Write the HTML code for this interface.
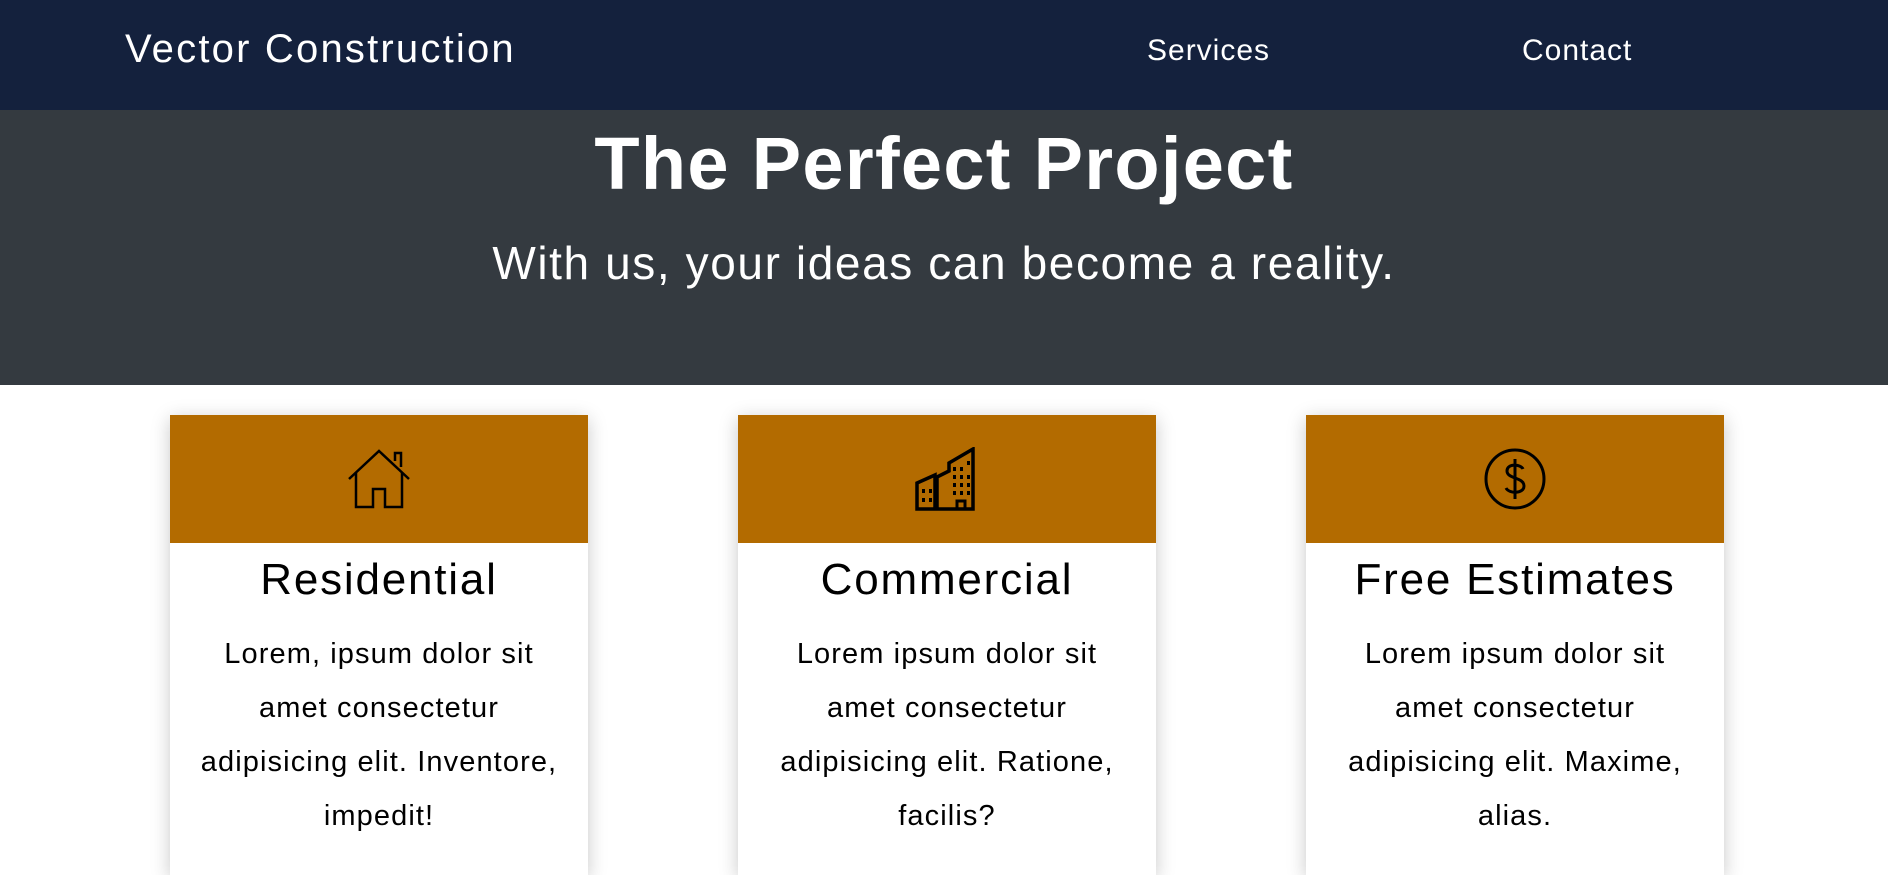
<!DOCTYPE html>
<html><head><style>
*{margin:0;padding:0;box-sizing:border-box}
body{width:1888px;height:858px;overflow:hidden;background:#fff;font-family:"Liberation Sans",sans-serif;position:relative}
nav{position:absolute;left:0;top:0;width:1888px;height:110px;background:#14213d;color:#fff}
nav .logo{position:absolute;left:125px;top:27px;font-size:40px;letter-spacing:2.2px}
nav .l{position:absolute;top:34px;font-size:30px;letter-spacing:1px}
.hero{position:absolute;top:110px;left:0;width:1888px;height:275px;background:#343a40;color:#fff;text-align:center}
.hero h1{position:absolute;top:11px;width:100%;font-size:74px;font-weight:bold;letter-spacing:1.3px}
.hero p{position:absolute;top:126px;width:100%;font-size:46px;letter-spacing:1.6px}
.card{position:absolute;top:415px;width:418px;height:460px;background:#fff;box-shadow:0 4px 18px rgba(0,0,0,.22);text-align:center}
.card .hd{height:128px;background:#b36b00;display:flex;align-items:center;justify-content:center}
.card h2{font-weight:normal;font-size:44px;margin-top:12px;line-height:50px;letter-spacing:1.8px}
.card p{font-size:29px;line-height:54px;margin:22px 30px 0;letter-spacing:1.1px}
</style></head><body>
<nav><div class="logo">Vector Construction</div><div class="l" style="left:1147px">Services</div><div class="l" style="left:1522px">Contact</div></nav>
<div class="hero"><h1>The Perfect Project</h1><p>With us, your ideas can become a reality.</p></div>
<div class="card" style="left:170px"><div class="hd"><svg width="64" height="64" viewBox="0 0 64 64" fill="none" stroke="#000" stroke-width="2.5"><path d="M2 32 L32 4 L62 32"/><path d="M48 14 V6 H54 V20"/><path d="M9 26 V60 H26 V42 H38 V60 H55 V26"/></svg></div>
<h2>Residential</h2><p>Lorem, ipsum dolor sit amet consectetur adipisicing elit. Inventore, impedit!</p></div>
<div class="card" style="left:738px"><div class="hd"><svg width="64" height="64" viewBox="0 0 64 64" fill="#000"><path d="M34 16 L58 2 V62 H2 V36 L20 28 V62 H22 V30 L34 24Z" fill="none" stroke="#000" stroke-width="3.5"/><g><rect x="38" y="20" width="3" height="4"/><rect x="45" y="20" width="3" height="4"/><rect x="52" y="14" width="3" height="4"/><rect x="38" y="28" width="3" height="4"/><rect x="45" y="28" width="3" height="4"/><rect x="52" y="28" width="3" height="4"/><rect x="38" y="36" width="3" height="4"/><rect x="45" y="36" width="3" height="4"/><rect x="52" y="36" width="3" height="4"/><rect x="38" y="44" width="3" height="4"/><rect x="45" y="44" width="3" height="4"/><rect x="52" y="44" width="3" height="4"/><rect x="7" y="42" width="3" height="4"/><rect x="14" y="42" width="3" height="4"/><rect x="7" y="51" width="3" height="4"/><rect x="14" y="51" width="3" height="4"/><path d="M42 62 V54 H50 V62" fill="none" stroke="#000" stroke-width="3"/></g></svg></div>
<h2>Commercial</h2><p>Lorem ipsum dolor sit amet consectetur adipisicing elit. Ratione, facilis?</p></div>
<div class="card" style="left:1306px"><div class="hd"><svg width="64" height="64" viewBox="0 0 64 64" fill="none" stroke="#000" stroke-width="3"><circle cx="32" cy="32" r="29"/><path d="M40 22 C38 17 24 16 24 24 C24 32 41 30 41 39 C41 47 26 47 23 41 M32 12 V52"/></svg></div>
<h2>Free Estimates</h2><p>Lorem ipsum dolor sit amet consectetur adipisicing elit. Maxime, alias.</p></div>
</body></html>
